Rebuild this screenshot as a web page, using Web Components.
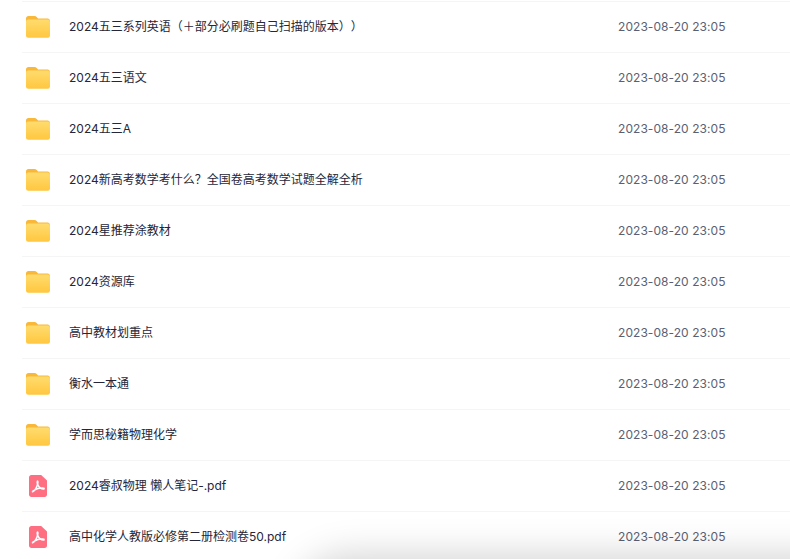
<!DOCTYPE html>
<html><head><meta charset="utf-8"><style>
html,body{margin:0;padding:0;background:#fff;height:559px;overflow:hidden}
</style></head><body>
<file-list>
<file-row kind="folder" name="2024五三系列英语（＋部分必刷题自己扫描的版本））"></file-row>
<file-row kind="folder" name="2024五三语文"></file-row>
<file-row kind="folder" name="2024五三A"></file-row>
<file-row kind="folder" name="2024新高考数学考什么？全国卷高考数学试题全解全析"></file-row>
<file-row kind="folder" name="2024星推荐涂教材"></file-row>
<file-row kind="folder" name="2024资源库"></file-row>
<file-row kind="folder" name="高中教材划重点"></file-row>
<file-row kind="folder" name="衡水一本通"></file-row>
<file-row kind="folder" name="学而思秘籍物理化学"></file-row>
<file-row kind="pdf" name="2024睿叔物理 懒人笔记-.pdf"></file-row>
<file-row kind="pdf" name="高中化学人教版必修第二册检测卷50.pdf"></file-row>
</file-list>
<script>
const FOLDER=`<svg width="24" height="22" viewBox="0 0 24 22"><defs><linearGradient id="f" x1="0" y1="0" x2="0" y2="1"><stop offset="0" stop-color="#ffdc6e"/><stop offset="1" stop-color="#ffc73f"/></linearGradient></defs><path d="M0 2.5C0 1 1 0 2.5 0H8.5c1 0 1.6.4 2.2 1l1.3 1.4H21.6C23 2.4 24 3.4 24 5v3H0Z" fill="#f9b839"/><rect x="0" y="3.6" width="24" height="18.2" rx="2.2" fill="url(#f)"/></svg>`;
const PDF=`<svg width="18" height="22" viewBox="0 0 18 22"><path d="M2.4 0H12.2L18 5.4V19.6C18 21 17 22 15.6 22H2.4C1 22 0 21 0 19.6V2.4C0 1 1 0 2.4 0Z" fill="#ff6f82"/><path d="M3.6 16.8C5.6 15.8 7.7 12.6 8.7 8.6C9 7.2 9 6 8.6 6C8 6 8 8.2 9 10.2C10.2 12.7 12 14 14.6 14C15.4 14 15.4 13.2 14.2 13.1C11.4 12.8 7.6 13.8 5 15.4C3.6 16.2 3.2 17 3.6 16.8Z" fill="none" stroke="#fff" stroke-width="1.5" stroke-linejoin="round"/></svg>`;
class FileList extends HTMLElement{constructor(){super();this.attachShadow({mode:'open'}).innerHTML=`<style>
:host{display:block;position:relative;height:559px;overflow:hidden;padding-top:1px;box-sizing:border-box;
font-family:Inter,"Noto Sans CJK SC",sans-serif}
.shade{position:absolute;left:310px;right:-60px;top:572px;height:40px;background:#000;border-radius:50px 0 0 0;box-shadow:0 0 36px 18px rgba(0,0,0,.17)}
</style><slot></slot><div class="shade"></div>`}}
class FileRow extends HTMLElement{constructor(){super();this.attachShadow({mode:'open'})}
connectedCallback(){const k=this.getAttribute('kind');this.shadowRoot.innerHTML=`<style>
:host{display:flex;align-items:center;height:51px;box-sizing:border-box;margin-left:22px;border-top:1px solid #f5f5f6}
.icon{width:32px;margin-right:15px;display:flex;justify-content:center;height:22px}
.name{flex:0 0 549px;font-size:12px;color:#25263a;white-space:nowrap;padding-bottom:3px;text-spacing-trim:space-all}
.date{font-size:12px;color:#5b5f73;white-space:nowrap;letter-spacing:.06px;padding-bottom:1px}
</style><span class="icon">${k==='pdf'?PDF:FOLDER}</span><span class="name">${this.getAttribute('name')}</span><span class="date">2023-08-20 23:05</span>`}}
customElements.define('file-list',FileList);customElements.define('file-row',FileRow);
</script>
</body></html>
